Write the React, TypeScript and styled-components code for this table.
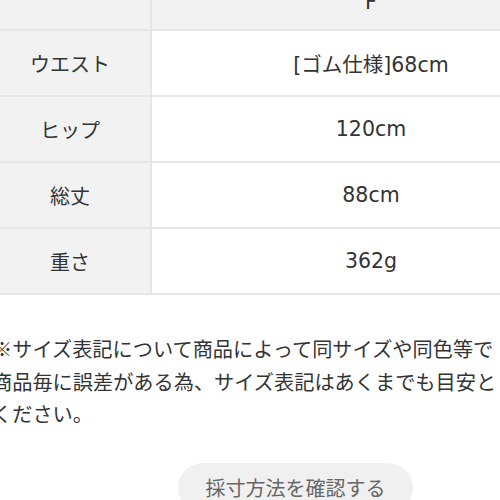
import React from "react";
import styled, { createGlobalStyle } from "styled-components";

const Global = createGlobalStyle`
  html, body { margin: 0; padding: 0; background: #fff; overflow: hidden; }
  body { font-family: "Noto Sans CJK JP", "Noto Sans", sans-serif; color: #333; }
`;

const Page = styled.div`
  width: 500px;
  height: 500px;
  overflow: hidden;
  position: relative;
`;

const Table = styled.div`
  display: grid;
  grid-template-columns: 160px 438px;
  column-gap: 2px;
  row-gap: 2px;
  background: #e6e6e6;
  margin-left: -10px;
  margin-top: -30px;
  padding-bottom: 2px;
  width: 600px;
`;

const Cell = styled.div<{ $head?: boolean; $label?: boolean }>`
  height: ${(p) => (p.$head ? 59 : 64)}px;
  display: flex;
  align-items: center;
  justify-content: center;
  background: ${(p) => (p.$head || p.$label ? "#f2f2f2" : "#fff")};
  font-family: ${(p) =>
    p.$label
      ? `"Noto Sans CJK JP", sans-serif`
      : `"DejaVu Sans", "Noto Sans CJK JP", sans-serif`};
  font-size: ${(p) => (p.$label ? 20 : 20.5)}px;
  padding-top: ${(p) => (p.$head ? 4 : 0)}px;
  box-sizing: border-box;
  color: #333;
  white-space: nowrap;
`;

const Note = styled.p`
  margin: 38px 0 0 -8px;
  font-size: 20.2px;
  line-height: 32.5px;
  color: #333;
  white-space: nowrap;
`;

const ButtonRow = styled.div`
  display: flex;
  margin-top: 32px;
  padding-left: 178px;
`;

const Button = styled.button`
  width: 235px;
  height: 50px;
  border-radius: 25px;
  border: none;
  background: #f0f0f0;
  color: #666;
  font-family: "Noto Sans CJK JP", "Noto Sans", sans-serif;
  font-size: 20px;
  padding: 0;
  display: flex;
  align-items: center;
  justify-content: center;
`;

const rows: [string, string][] = [
  ["ウエスト", "[ゴム仕様]68cm"],
  ["ヒップ", "120cm"],
  ["総丈", "88cm"],
  ["重さ", "362g"],
];

export default function App() {
  return (
    <Page>
      <Global />
      <Table>
        <Cell $head $label />
        <Cell $head>F</Cell>
        {rows.map(([k, v]) => (
          <React.Fragment key={k}>
            <Cell $label>{k}</Cell>
            <Cell>{v}</Cell>
          </React.Fragment>
        ))}
      </Table>
      <Note>
        ※サイズ表記について商品によって同サイズや同色等で
        <br />
        商品毎に誤差がある為、サイズ表記はあくまでも目安と
        <br />
        ください。
      </Note>
      <ButtonRow>
        <Button>採寸方法を確認する</Button>
      </ButtonRow>
    </Page>
  );
}
